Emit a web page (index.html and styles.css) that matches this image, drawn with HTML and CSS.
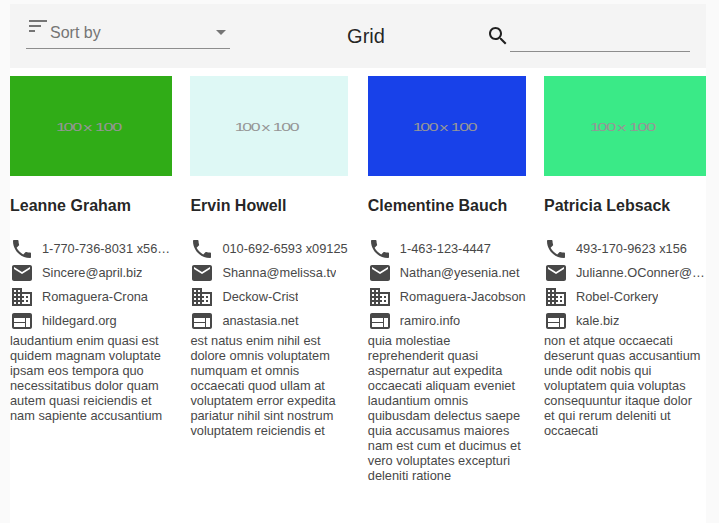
FILE: index.html
```html
<!DOCTYPE html>
<html lang="en">
<head>
<meta charset="utf-8">
<title>Grid</title>
<link rel="stylesheet" href="styles.css">
</head>
<body>
<svg class="defs" aria-hidden="true">
  <symbol id="phone" viewBox="0 0 24 24"><path d="M6.62 10.79c1.44 2.83 3.76 5.14 6.59 6.59l2.2-2.2c.27-.27.67-.36 1.02-.24 1.12.37 2.33.57 3.57.57.55 0 1 .45 1 1V20c0 .55-.45 1-1 1-9.39 0-17-7.61-17-17 0-.55.45-1 1-1h3.5c.55 0 1 .45 1 1 0 1.25.2 2.45.57 3.57.11.35.03.74-.25 1.02l-2.2 2.2z"/></symbol>
  <symbol id="email" viewBox="0 0 24 24"><path d="M20 4H4c-1.1 0-1.99.9-1.99 2L2 18c0 1.1.9 2 2 2h16c1.1 0 2-.9 2-2V6c0-1.1-.9-2-2-2zm0 4l-8 5-8-5V6l8 5 8-5v2z"/></symbol>
  <symbol id="business" viewBox="0 0 24 24"><path d="M12 7V3H2v18h20V7H12zM6 19H4v-2h2v2zm0-4H4v-2h2v2zm0-4H4V9h2v2zm0-4H4V5h2v2zm4 12H8v-2h2v2zm0-4H8v-2h2v2zm0-4H8V9h2v2zm0-4H8V5h2v2zm10 12h-8v-2h2v-2h-2v-2h2v-2h-2V9h8v10zm-2-8h-2v2h2v-2zm0 4h-2v2h2v-2z"/></symbol>
  <symbol id="web" viewBox="0 0 24 24"><path d="M20 4H4c-1.1 0-1.99.9-1.99 2L2 18c0 1.1.9 2 2 2h16c1.1 0 2-.9 2-2V6c0-1.1-.9-2-2-2zm-5 14H4v-4h11v4zm0-5H4V9h11v4zm5 5h-4V9h4v9z"/></symbol>
  <symbol id="size" viewBox="0 0 100 100" preserveAspectRatio="none"><text y="55" x="28.4 33.1 38.4 44 45.3 51 52.4 57.8 63.1">100 x 100</text></symbol>
</svg>
<div class="page">
  <header class="toolbar">
    <div class="sort">
      <svg class="icon sort-icon" viewBox="0 0 24 24"><path d="M3 18h6v-2H3v2zM3 6v2h18V6H3zm0 7h12v-2H3v2z"/></svg>
      <span class="sort-label">Sort by</span>
      <svg class="caret" viewBox="0 0 10 5"><path d="M0 0h10L5 5z"/></svg>
    </div>
    <h1 class="title">Grid</h1>
    <div class="search">
      <svg class="icon" viewBox="0 0 24 24"><path d="M15.5 14h-.79l-.28-.27C15.41 12.59 16 11.11 16 9.5 16 5.91 13.09 3 9.5 3S3 5.91 3 9.5 5.91 16 9.5 16c1.61 0 3.09-.59 4.23-1.57l.27.28v.79l5 4.99L20.49 19l-4.99-5zm-6 0C7.01 14 5 11.99 5 9.5S7.01 5 9.5 5 14 7.01 14 9.5 11.99 14 9.5 14z"/></svg>
      <input class="search-input" type="text" aria-label="Search">
    </div>
  </header>
  <main class="cards">
    <article class="card">
      <svg class="photo green"><use href="#size"/></svg>
      <h2 class="name">Leanne Graham</h2>
      <ul class="details">
        <li><svg class="icon"><use href="#phone"/></svg><span>1-770-736-8031 x56442</span></li>
        <li><svg class="icon"><use href="#email"/></svg><span>Sincere@april.biz</span></li>
        <li><svg class="icon"><use href="#business"/></svg><span>Romaguera-Crona</span></li>
        <li><svg class="icon"><use href="#web"/></svg><span>hildegard.org</span></li>
      </ul>
      <p class="about">laudantium enim quasi est<br>quidem magnam voluptate<br>ipsam eos tempora quo<br>necessitatibus dolor quam<br>autem quasi reiciendis et<br>nam sapiente accusantium</p>
    </article>
    <article class="card narrow">
      <svg class="photo mint"><use href="#size"/></svg>
      <h2 class="name">Ervin Howell</h2>
      <ul class="details">
        <li><svg class="icon"><use href="#phone"/></svg><span>010-692-6593 x09125</span></li>
        <li><svg class="icon"><use href="#email"/></svg><span>Shanna@melissa.tv</span></li>
        <li><svg class="icon"><use href="#business"/></svg><span>Deckow-Crist</span></li>
        <li><svg class="icon"><use href="#web"/></svg><span>anastasia.net</span></li>
      </ul>
      <p class="about">est natus enim nihil est<br>dolore omnis voluptatem<br>numquam et omnis<br>occaecati quod ullam at<br>voluptatem error expedita<br>pariatur nihil sint nostrum<br>voluptatem reiciendis et</p>
    </article>
    <article class="card narrow">
      <svg class="photo blue"><use href="#size"/></svg>
      <h2 class="name">Clementine Bauch</h2>
      <ul class="details">
        <li><svg class="icon"><use href="#phone"/></svg><span>1-463-123-4447</span></li>
        <li><svg class="icon"><use href="#email"/></svg><span>Nathan@yesenia.net</span></li>
        <li><svg class="icon"><use href="#business"/></svg><span>Romaguera-Jacobson</span></li>
        <li><svg class="icon"><use href="#web"/></svg><span>ramiro.info</span></li>
      </ul>
      <p class="about">quia molestiae<br>reprehenderit quasi<br>aspernatur aut expedita<br>occaecati aliquam eveniet<br>laudantium omnis<br>quibusdam delectus saepe<br>quia accusamus maiores<br>nam est cum et ducimus et<br>vero voluptates excepturi<br>deleniti ratione</p>
    </article>
    <article class="card">
      <svg class="photo spring"><use href="#size"/></svg>
      <h2 class="name">Patricia Lebsack</h2>
      <ul class="details">
        <li><svg class="icon"><use href="#phone"/></svg><span>493-170-9623 x156</span></li>
        <li><svg class="icon"><use href="#email"/></svg><span>Julianne.OConner@kory.org</span></li>
        <li><svg class="icon"><use href="#business"/></svg><span>Robel-Corkery</span></li>
        <li><svg class="icon"><use href="#web"/></svg><span>kale.biz</span></li>
      </ul>
      <p class="about">non et atque occaecati<br>deserunt quas accusantium<br>unde odit nobis qui<br>voluptatem quia voluptas<br>consequuntur itaque dolor<br>et qui rerum deleniti ut<br>occaecati</p>
    </article>
  </main>
</div>
</body>
</html>
```

FILE: styles.css
```css
* { box-sizing: border-box; }

body {
  margin: 0;
  height: 523px;
  overflow: hidden;
  background: #fafafa;
  color: rgba(0, 0, 0, 0.87);
  font-family: "Liberation Sans", Arial, sans-serif;
}

.defs { display: none; }

.page {
  display: flex;
  flex-direction: column;
  width: 696px;
  height: 523px;
  margin-left: 10px;
  padding-top: 4px;
}

.icon {
  flex: none;
  display: block;
  width: 24px;
  height: 24px;
  fill: currentColor;
}

.toolbar {
  flex: none;
  display: flex;
  justify-content: space-between;
  height: 64px;
  padding: 0 16px;
  background: #f4f4f4;
}

.sort {
  display: flex;
  width: 204px;
  height: 45px;
  padding: 10px 4px 0 0;
  border-bottom: 1px solid #8d8d8d;
  color: #757575;
}

.sort-label {
  flex: 1;
  padding-top: 10px;
  font-size: 16px;
  line-height: 18px;
}

.caret {
  width: 10px;
  height: 5px;
  margin-top: 16px;
  fill: #757575;
}

.title {
  margin: 0 0 0 16px;
  font-size: 20px;
  font-weight: 400;
  line-height: 64px;
}

.search {
  display: flex;
  width: 204px;
  padding-top: 20px;
}

.search-input {
  width: 180px;
  height: 28px;
  padding: 0;
  border: 0;
  border-bottom: 1px solid #8d8d8d;
  outline: 0;
  background: transparent;
  font: inherit;
}

.cards {
  flex: 1;
  display: grid;
  grid-template-columns: 180.4px 177.4px 176.2px 162px;
  padding-top: 8px;
  background: #fff;
}

.card { width: 162px; }

.card.narrow { width: 158px; }

.photo {
  display: block;
  width: 100%;
  height: 100px;
  fill: #969696;
  font-size: 11.2px;
}

.green { background: #30ac17; }
.mint { background: #def8f5; }
.blue { background: #1841e9; }
.spring { background: #3aea87; }

.name {
  margin: 20px 0 22px;
  font-size: 16px;
  line-height: 19px;
  white-space: nowrap;
}

.details {
  margin: 0;
  padding: 0;
  list-style: none;
  color: #484848;
  font-size: 12.8px;
}

.details li {
  display: flex;
  gap: 8px;
  height: 24px;
  line-height: 23px;
}

.details span {
  min-width: 0;
  overflow: hidden;
  text-overflow: ellipsis;
  white-space: nowrap;
}

.about {
  margin: 0;
  color: #484848;
  font-size: 12.8px;
  line-height: 15px;
  white-space: nowrap;
}
```
